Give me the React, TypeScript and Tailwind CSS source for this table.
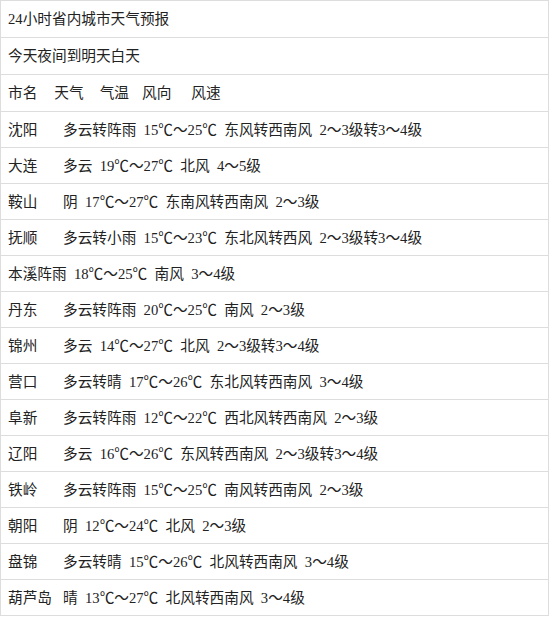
const rows: [string, string][] = [
  ["沈阳", "多云转阵雨  15℃～25℃  东风转西南风  2～3级转3～4级"],
  ["大连", "多云  19℃～27℃  北风  4～5级"],
  ["鞍山", "阴  17℃～27℃  东南风转西南风  2～3级"],
  ["抚顺", "多云转小雨  15℃～23℃  东北风转西风  2～3级转3～4级"],
  ["", "本溪阵雨  18℃～25℃  南风  3～4级"],
  ["丹东", "多云转阵雨  20℃～25℃  南风  2～3级"],
  ["锦州", "多云  14℃～27℃  北风  2～3级转3～4级"],
  ["营口", "多云转晴  17℃～26℃  东北风转西南风  3～4级"],
  ["阜新", "多云转阵雨  12℃～22℃  西北风转西南风  2～3级"],
  ["辽阳", "多云  16℃～26℃  东风转西南风  2～3级转3～4级"],
  ["铁岭", "多云转阵雨  15℃～25℃  南风转西南风  2～3级"],
  ["朝阳", "阴  12℃～24℃  北风  2～3级"],
  ["盘锦", "多云转晴  15℃～26℃  北风转西南风  3～4级"],
  ["葫芦岛", "晴  13℃～27℃  北风转西南风  3～4级"],
];

const font = {
  fontFamily: '"Liberation Serif", "Noto Sans CJK SC", serif',
};

function Row({ children, tall }: { children: React.ReactNode; tall?: boolean }) {
  return (
    <div
      className={`flex items-center border-b border-[#dddddd] px-[7px] whitespace-pre ${
        tall ? "h-[37px]" : "h-[36px]"
      }`}
    >
      {children}
    </div>
  );
}

export default function App() {
  return (
    <div className="h-[617px] w-[549px] bg-white text-[14.67px] text-[#222]" style={font}>
      <div className="border-x border-t border-[#dddddd]">
        <Row tall>24小时省内城市天气预报</Row>
        <Row tall>今天夜间到明天白天</Row>
        <Row tall>
          <span>市名</span>
          <span className="ml-[17px]">天气</span>
          <span className="ml-[16px]">气温</span>
          <span className="ml-[13px]">风向</span>
          <span className="ml-[20px]">风速</span>
        </Row>
        {rows.map(([city, text]) => (
          <Row key={text}>
            {city && <span className="inline-block w-[55px]">{city}</span>}
            <span>{text}</span>
          </Row>
        ))}
      </div>
    </div>
  );
}
